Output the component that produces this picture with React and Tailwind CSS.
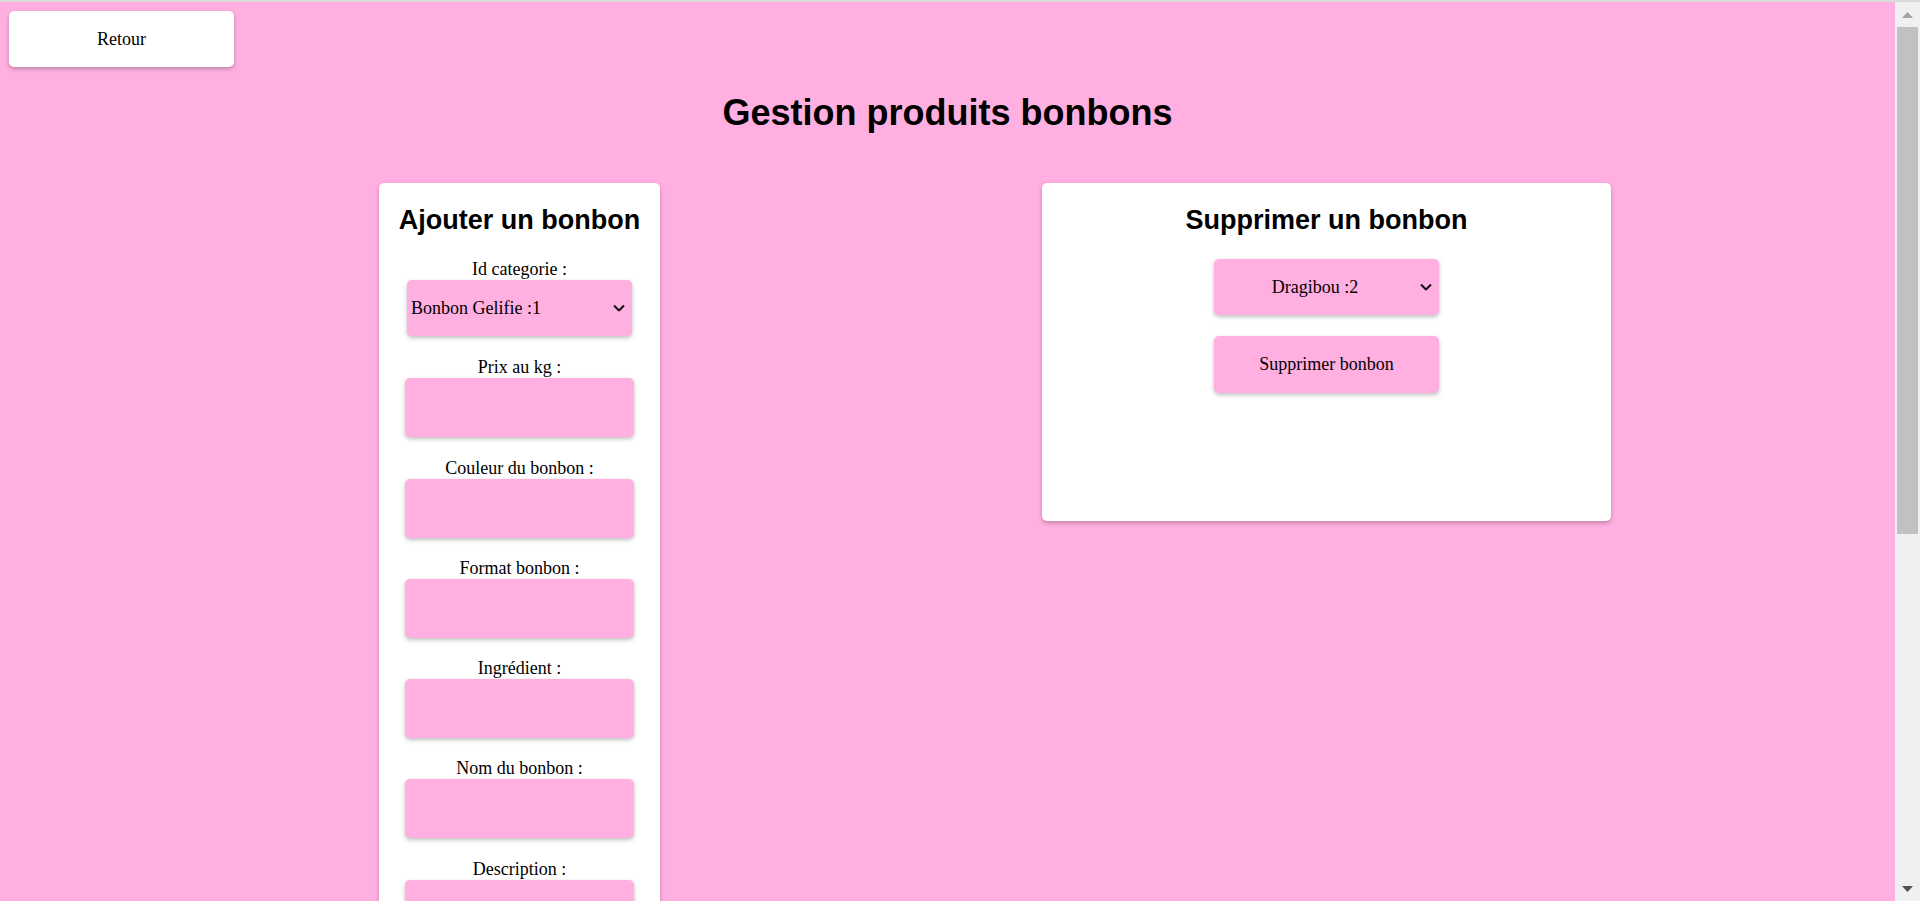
import React from "react";

const PINK = "bg-[#ffafe0]";

function Chevron() {
  return (
    <svg
      className="pointer-events-none absolute right-[7px] top-1/2 -translate-y-1/2"
      width="12"
      height="7"
      viewBox="0 0 12 7"
      fill="none"
    >
      <polyline points="1,1 6,6 11,1" stroke="#111" strokeWidth="2" />
    </svg>
  );
}

function Field({ label }) {
  return (
    <div className="mb-[20.3px] flex flex-col items-center">
      <label className="block text-center leading-[normal]">{label}</label>
      <input
        type="text"
        className={`h-[59px] w-[229px] rounded-[5px] ${PINK} shadow-[0_2px_4px_rgba(0,0,0,0.25)] outline-none`}
      />
    </div>
  );
}

function ScrollBar() {
  return (
    <div className="flex w-[25px] shrink-0 flex-col bg-[#f0f0f0]">
      <div className="flex h-[25px] shrink-0 items-center justify-center">
        <svg width="11" height="6" viewBox="0 0 11 6">
          <polygon points="0,6 5.5,0 11,6" fill="#a3a3a3" />
        </svg>
      </div>
      <div className="flex-1">
        <div className="mx-[2px] h-[507px] bg-[#c1c1c1]" />
      </div>
      <div className="flex h-[25px] shrink-0 items-center justify-center">
        <svg width="11" height="6" viewBox="0 0 11 6">
          <polygon points="0,0 11,0 5.5,6" fill="#505050" />
        </svg>
      </div>
    </div>
  );
}

export default function App() {
  const fields = [
    "Prix au kg :",
    "Couleur du bonbon :",
    "Format bonbon :",
    "Ingrédient :",
    "Nom du bonbon :",
    "Description :",
    "Image :",
    "Stock :",
    "Marque :",
    "Allergènes :",
  ];

  return (
    <div className="flex h-screen flex-col bg-[#dadada] font-['Liberation_Serif','Times_New_Roman',serif] text-[18px] leading-[normal] text-black">
      <div className="h-[2px] shrink-0 bg-[#dadada]" />
      <div className="flex min-h-0 flex-1">
        <div className={`min-w-0 flex-1 overflow-y-auto ${PINK} [scrollbar-width:none]`}>
          <div className="pl-[9px] pt-[9px]">
            <button className="h-[56px] w-[225px] rounded-[5px] bg-white text-[18px] shadow-[0_2px_4px_rgba(0,0,0,0.25)]">
              Retour
            </button>
          </div>

          <h1 className="mb-[24px] mt-[25px] text-center font-['Liberation_Sans',Arial,sans-serif] text-[36px] font-bold leading-[normal]">
            Gestion produits bonbons
          </h1>

          <div className="grid grid-cols-[807px_807px] items-start justify-items-center pb-[65px] pl-[116px] pt-[25px]">
            {/* Ajouter */}
            <div className="flex w-[281px] flex-col items-center rounded-[5px] bg-white pb-[22px] shadow-[0_2px_4px_rgba(0,0,0,0.25)]">
              <h2 className="my-[22.4px] font-['Liberation_Sans',Arial,sans-serif] text-[27px] font-bold leading-[normal]">
                Ajouter un bonbon
              </h2>
              <div className="mb-[21.5px] flex flex-col items-center">
                <label className="block text-center leading-[normal]">Id categorie :</label>
                <div className="relative">
                  <select
                    className={`h-[56px] w-[225px] appearance-none rounded-[5px] ${PINK} pl-[4px] pr-[24px] text-[18px] shadow-[0_2px_4px_rgba(0,0,0,0.25)] outline-none`}
                    defaultValue="1"
                  >
                    <option value="1">Bonbon Gelifie :1</option>
                    <option value="2">Dragibou :2</option>
                  </select>
                  <Chevron />
                </div>
              </div>
              {fields.map((f) => (
                <Field key={f} label={f} />
              ))}
              <button
                className={`h-[57px] w-[225px] rounded-[5px] ${PINK} text-[18px] shadow-[0_2px_4px_rgba(0,0,0,0.25)]`}
              >
                Ajouter bonbon
              </button>
            </div>

            {/* Supprimer */}
            <div className="flex h-[338px] w-[569px] flex-col items-center rounded-[5px] bg-white shadow-[0_2px_4px_rgba(0,0,0,0.25)]">
              <h2 className="my-[22.4px] font-['Liberation_Sans',Arial,sans-serif] text-[27px] font-bold leading-[normal]">
                Supprimer un bonbon
              </h2>
              <div className="relative">
                <select
                  className={`h-[56px] w-[225px] appearance-none rounded-[5px] ${PINK} pl-[4px] pr-[27px] text-[18px] shadow-[0_2px_4px_rgba(0,0,0,0.25)] outline-none [text-align-last:center]`}
                  defaultValue="2"
                >
                  <option value="1">Bonbon Gelifie :1</option>
                  <option value="2">Dragibou :2</option>
                </select>
                <Chevron />
              </div>
              <button
                className={`mt-[21px] h-[57px] w-[225px] rounded-[5px] ${PINK} text-[18px] shadow-[0_2px_4px_rgba(0,0,0,0.25)]`}
              >
                Supprimer bonbon
              </button>
            </div>
          </div>
        </div>
        <ScrollBar />
      </div>
    </div>
  );
}
